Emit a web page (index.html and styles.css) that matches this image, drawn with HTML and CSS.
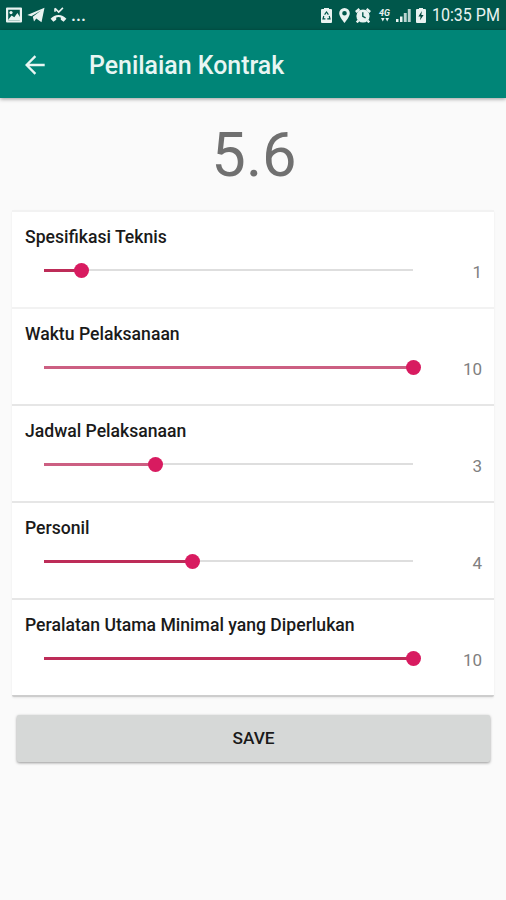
FILE: index.html
```
<!DOCTYPE html>
<html lang="id">
<head>
  <meta charset="UTF-8" />
  <meta name="viewport" content="width=device-width, initial-scale=1.0"/>
  <title>Penilaian Kontrak</title>
  <link rel="stylesheet" href="styles.css">
</head>
<body>

  <!-- Status bar -->
  <div class="status-bar">
    <div class="status-left">
      <svg width="16" height="16" viewBox="0 0 16 16">
        <path fill="currentColor" fill-rule="evenodd" d="M1 0.5h14q1 0 1 1v13q0 1-1 1H1q-1 0-1-1v-13q0-1 1-1zM2.2 2.7v10.6h11.6v-10.6z"/>
        <path fill="currentColor" d="M2 13l3.6-4.4 2.7 1.6L11.4 6l2.6 4v3z"/>
        <circle cx="5" cy="5.6" r="1.6" fill="currentColor"/>
      </svg>
      <svg width="18" height="16" viewBox="0 0 18 16">
        <path fill="currentColor" d="M0.3 8L17.5 0.8 14.5 15.2 9.3 11.6 7 14.6 5.8 9.8 14 3.6 4.4 9.2z"/>
      </svg>
      <svg width="17" height="16" viewBox="0 0 17 16">
        <path fill="none" stroke="currentColor" stroke-width="1.6" d="M5 1.2v3.6M5 1.4l3.7 3.7 4.2-4.2"/>
        <path fill="currentColor" d="M0.6 11.8C4.6 6.6 12.4 6.6 16.4 11.8L13.6 14.8 10.8 12.8V10.4Q8.5 9.7 6.2 10.4V12.8L3.4 14.8z"/>
      </svg>
      <span class="more">...</span>
    </div>
    <div class="status-right">
      <svg class="recycle" width="11" height="15" viewBox="0 0 11 15">
        <path fill="currentColor" d="M3 1V0h5v1h2q1 0 1 1v12q0 1-1 1H1q-1 0-1-1V2q0-1 1-1z"/>
        <path fill="none" stroke="#00574b" stroke-width="1.2" d="M3.6 6.6L5.5 4l1.9 2.6M2.8 8L2 10.9h2.4M8.2 8l.8 2.9H6.3"/>
      </svg>
      <svg class="pin" width="11" height="15" viewBox="0 0 11 15">
        <path fill="currentColor" fill-rule="evenodd" d="M5.5 0A5.3 5.3 0 0 1 10.8 5.3C10.8 9 5.5 15 5.5 15S.2 9 .2 5.3A5.3 5.3 0 0 1 5.5 0zM5.5 3a2.3 2.3 0 1 0 0 4.6 2.3 2.3 0 0 0 0-4.6z"/>
      </svg>
      <svg class="alarm" width="16" height="15" viewBox="0 0 16 15">
        <circle cx="8" cy="8" r="6.6" fill="currentColor"/>
        <path fill="none" stroke="currentColor" stroke-width="2.4" d="M.8 4L4.4 1M15.2 4L11.6 1M3.4 12.4L1.8 14.4M12.6 12.4l1.6 2"/>
        <path fill="none" stroke="#00574b" stroke-width="1.4" d="M7.8 4.3v4.1l2.8 1.5"/>
      </svg>
      <div class="network">
        <span>4G</span>
        <svg width="8" height="5" viewBox="0 0 8 5">
          <path fill="currentColor" d="M0 1h3.6L1.8 4.6zM4.4 1H8L6.2 4.6z"/>
        </svg>
      </div>
      <svg class="signal" width="15" height="14" viewBox="0 0 15 14">
        <path fill="currentColor" d="M0 11h2.5v3H0zM4 8.5h2.5V14H4z"/>
        <path fill="currentColor" opacity=".8" d="M7.8 5h2.9v9H7.8zM11.8 1h2.9v13h-2.9z"/>
      </svg>
      <svg class="battery" width="10" height="15" viewBox="0 0 10 15">
        <path fill="currentColor" d="M3 1V0h4v1h2q1 0 1 1v12q0 1-1 1H1q-1 0-1-1V2q0-1 1-1z"/>
        <path fill="#00463c" d="M5.9 3L2.4 8.5h2.2L4 12.2 7.6 7H5.3z"/>
      </svg>
      <span class="time">10:35 PM</span>
    </div>
  </div>

  <!-- App bar -->
  <header class="app-bar">
    <svg class="back" width="20" height="20" viewBox="0 0 20 20">
      <path fill="none" stroke="currentColor" stroke-width="2.3" d="M19.7 10H1.8M10.4 1.1L1.6 10l8.8 8.9"/>
    </svg>
    <h1>Penilaian Kontrak</h1>
  </header>

  <main>
    <div class="score">5.6</div>

    <div class="list">
      <div class="item first">
        <h2>Spesifikasi Teknis</h2>
        <div class="slider-row">
          <div class="slider"><div class="fill" style="width: 10%"><span class="thumb"></span></div></div>
          <span class="value">1</span>
        </div>
      </div>
      <div class="item soft">
        <h2>Waktu Pelaksanaan</h2>
        <div class="slider-row">
          <div class="slider"><div class="fill light" style="width: 100%"><span class="thumb"></span></div></div>
          <span class="value">10</span>
        </div>
      </div>
      <div class="item">
        <h2>Jadwal Pelaksanaan</h2>
        <div class="slider-row">
          <div class="slider"><div class="fill light" style="width: 30%"><span class="thumb"></span></div></div>
          <span class="value">3</span>
        </div>
      </div>
      <div class="item">
        <h2>Personil</h2>
        <div class="slider-row">
          <div class="slider"><div class="fill" style="width: 40%"><span class="thumb"></span></div></div>
          <span class="value">4</span>
        </div>
      </div>
      <div class="item">
        <h2>Peralatan Utama Minimal yang Diperlukan</h2>
        <div class="slider-row">
          <div class="slider"><div class="fill" style="width: 100%"><span class="thumb"></span></div></div>
          <span class="value">10</span>
        </div>
      </div>
    </div>

    <button class="save">SAVE</button>
  </main>

</body>
</html>
```
FILE: styles.css
```
* {
  box-sizing: border-box;
}

body {
  margin: 0;
  height: 900px;
  overflow: hidden;
  background: #fafafa;
  font-family: Roboto, sans-serif;
}

svg {
  display: block;
  flex-shrink: 0;
}

.status-bar {
  display: flex;
  justify-content: space-between;
  height: 30px;
  padding: 0 7px 0 6px;
  background: #00574b;
  color: #e9f3f1;
}

.status-left,
.status-right {
  display: flex;
  align-items: center;
}

.status-left {
  gap: 5px;
}

.more {
  margin-left: -1px;
  font-size: 18px;
  font-weight: 500;
  line-height: 30px;
}

.pin {
  margin-left: 7px;
}

.alarm {
  margin-left: 5px;
}

.network {
  display: flex;
  flex-direction: column;
  align-items: center;
  width: 13px;
  margin-left: 7px;
}

.network span {
  font-size: 9px;
  font-weight: 700;
  font-style: italic;
  line-height: 8px;
}

.signal {
  margin-left: 5px;
}

.battery {
  margin-left: 5px;
}

/* narrower digits, as on the phone's own clock */
.time {
  width: 67px;
  margin-left: 6px;
  font-size: 18.5px;
  line-height: 31px;
  white-space: nowrap;
  transform: scaleX(0.865);
  transform-origin: left center;
}

.app-bar {
  display: flex;
  align-items: center;
  height: 68px;
  padding: 2px 25px 0;
  background: #008577;
  color: #e8f6f3;
  box-shadow: 0 1px 4px rgba(0, 0, 0, 0.4);
}

h1 {
  margin: 0 0 0 44px;
  font-size: 24.9px;
  font-weight: 500;
}

main {
  padding: 0 12px;
}

.score {
  height: 112px;
  padding-left: 2px;
  font-size: 61.5px;
  line-height: 114px;
  text-align: center;
  color: #707070;
}

.list {
  background: #fff;
  border-bottom: 2px solid #cdcdcd;
  border-radius: 2px;
  box-shadow: 0 1px 2px rgba(0, 0, 0, 0.08);
}

.item {
  height: 97px;
  padding: 15px 12px 0 13px;
  border-top: 2px solid #e6e6e6;
}

.item.first,
.item.soft {
  border-top-color: #f2f2f2;
}

h2 {
  margin: 0;
  font-size: 17.6px;
  font-weight: 500;
  line-height: 20px;
  color: #1a1a1a;
}

.slider-row {
  display: flex;
  align-items: center;
  justify-content: space-between;
  height: 20px;
  margin-top: 13px;
  padding-left: 19px;
}

.slider {
  width: 369px;
  height: 2px;
  background: #dedede;
}

.fill {
  position: relative;
  height: 3px;
  background: #bd2c58;
}

.fill.light {
  background: #cc5f82;
}

.thumb {
  position: absolute;
  top: -6px;
  right: -8px;
  width: 15px;
  height: 15px;
  border-radius: 50%;
  background: #d81b60;
}

.value {
  padding-top: 3px;
  font-size: 17px;
  color: #808080;
}

.save {
  display: block;
  width: 473px;
  height: 47px;
  margin: 18px 0 0 5px;
  padding: 0 0 2px;
  border: none;
  border-radius: 2px;
  background: #d6d8d7;
  color: #1a1a1a;
  font-family: inherit;
  font-size: 17.3px;
  font-weight: 500;
  box-shadow: 0 1px 3px rgba(0, 0, 0, 0.4);
}
```
